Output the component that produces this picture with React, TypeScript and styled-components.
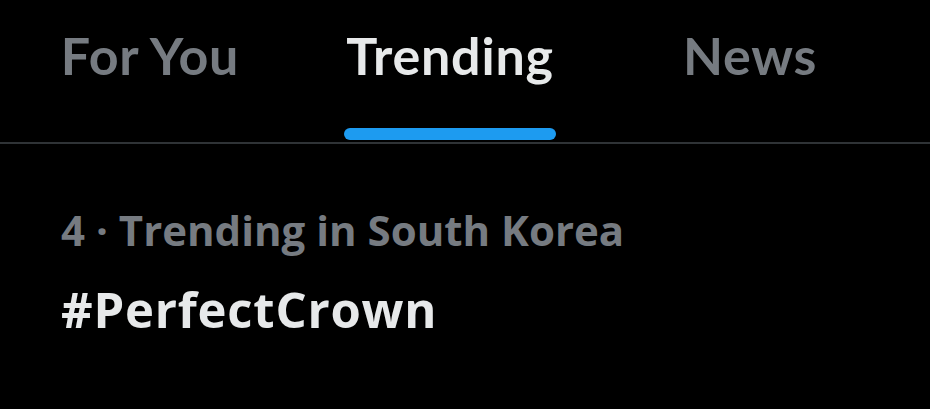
import React from 'react';
import styled, { createGlobalStyle } from 'styled-components';

const GlobalStyle = createGlobalStyle`
  html, body {
    margin: 0;
    padding: 0;
    background: #000;
  }
  body {
    width: 930px;
    height: 409px;
    overflow: hidden;
  }
`;

const Page = styled.div`
  width: 930px;
  height: 409px;
  background: #000;
  display: flex;
  flex-direction: column;
`;

const TabBar = styled.nav`
  display: grid;
  grid-template-columns: repeat(3, 300px);
  height: 142px;
  border-bottom: 2px solid #2f3336;
  box-sizing: content-box;
`;

const Tab = styled.div<{ $active?: boolean }>`
  display: flex;
  flex-direction: column;
  align-items: center;
  padding-top: 22px;
  font-family: Lato, "Open Sans", sans-serif;
  font-weight: 700;
  font-size: 52px;
  letter-spacing: 0.8px;
  line-height: 66px;
  color: ${(p) => (p.$active ? '#e7e9ea' : '#767b81')};
  cursor: pointer;
`;

const Label = styled.span`
  display: inline-flex;
  flex-direction: column;
  align-items: stretch;
  height: 118px;
  justify-content: space-between;
`;

const Indicator = styled.div<{ $show?: boolean }>`
  height: 12px;
  border-radius: 6px;
  margin: 0 -2px;
  background: ${(p) => (p.$show ? '#1d9bf0' : 'transparent')};
`;

const Trend = styled.section`
  padding: 61px 0 0 61px;
  display: flex;
  flex-direction: column;
  gap: 24px;
`;

const Meta = styled.div`
  font-family: "Open Sans", sans-serif;
  font-weight: 700;
  font-size: 42px;
  line-height: 50px;
  color: #767b81;
`;

const Hashtag = styled.div`
  font-family: "Open Sans", sans-serif;
  font-weight: 700;
  font-size: 49px;
  letter-spacing: 0.8px;
  line-height: 60px;
  color: #e7e9ea;
`;

const tabs = ['For You', 'Trending', 'News'];

const App = () => {
  const active = 'Trending';
  return (
    <Page>
      <GlobalStyle />
      <TabBar>
        {tabs.map((t) => (
          <Tab key={t} $active={t === active}>
            <Label>
              {t}
              <Indicator $show={t === active} />
            </Label>
          </Tab>
        ))}
      </TabBar>
      <Trend>
        <Meta>4 · Trending in South Korea</Meta>
        <Hashtag>#PerfectCrown</Hashtag>
      </Trend>
    </Page>
  );
};

export default App;
